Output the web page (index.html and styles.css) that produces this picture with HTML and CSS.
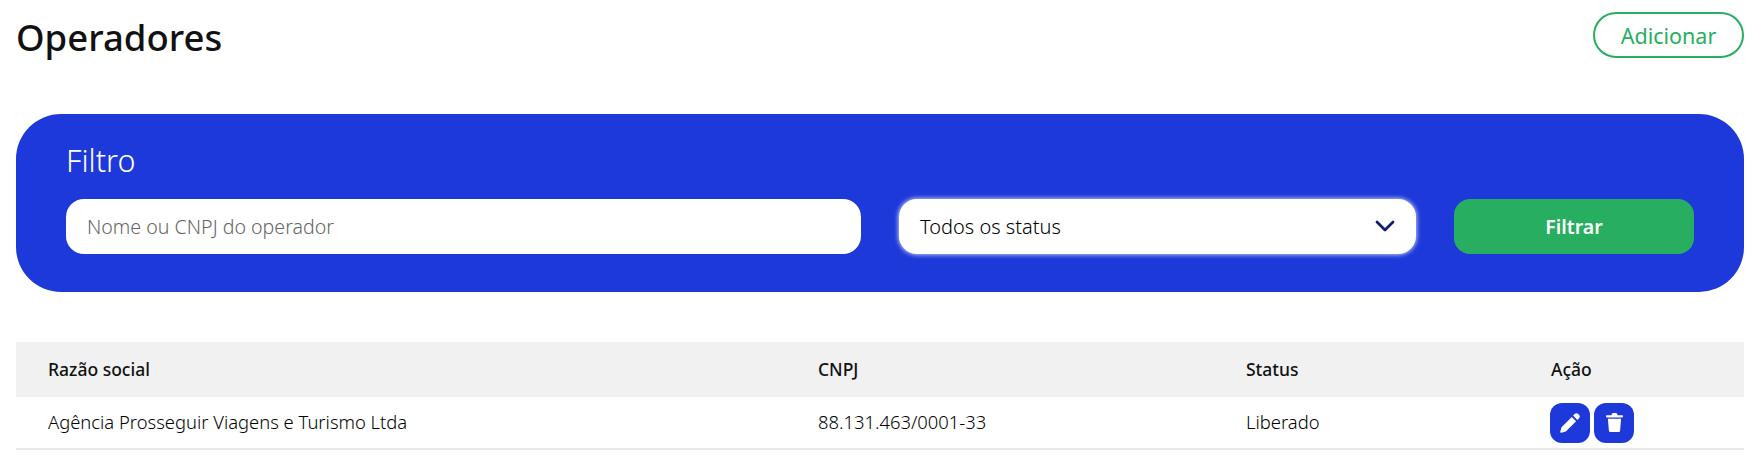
FILE: index.html
```html
<!DOCTYPE html>
<html lang="pt-BR">
<head>
<meta charset="utf-8">
<title>Operadores</title>
<link rel="stylesheet" href="styles.css">
</head>
<body>
<main class="page">
  <header class="top">
    <h1 class="title">Operadores</h1>
    <button class="add" type="button">Adicionar</button>
  </header>
  <section class="filter">
    <h2 class="filter-title">Filtro</h2>
    <div class="filter-row">
      <div class="field field-name"><span class="placeholder">Nome ou CNPJ do operador</span></div>
      <div class="field field-status">
        <span>Todos os status</span>
        <svg class="chevron" viewBox="0 0 20 12" width="20" height="12" aria-hidden="true"><path d="M2 2l8 8 8-8" fill="none" stroke="#101f73" stroke-width="2.800" stroke-linecap="round" stroke-linejoin="round"/></svg>
      </div>
      <button class="apply" type="button">Filtrar</button>
    </div>
  </section>
  <table class="list">
    <thead>
      <tr><th class="c1">Razão social</th><th class="c2">CNPJ</th><th class="c3">Status</th><th>Ação</th></tr>
    </thead>
    <tbody>
      <tr>
        <td>Agência Prosseguir Viagens e Turismo Ltda</td>
        <td>88.131.463/0001-33</td>
        <td>Liberado</td>
        <td>
          <div class="actions">
            <button class="icon-btn" type="button" aria-label="Editar"><svg viewBox="0 0 20 20" width="20" height="20" aria-hidden="true"><path fill="#fff" d="M1.500 14.200L11.800 3.900l4.300 4.300L5.800 18.500l-4.400 1.200c-.8.200-1.300-.3-1.100-1.100zM13.100 2.600L14.900.800c.9-.9 2.100-.9 3 0l1.300 1.300c.9.900.9 2.100 0 3l-1.800 1.800z"/></svg></button>
            <button class="icon-btn" type="button" aria-label="Excluir"><svg viewBox="0 0 17 19" width="17" height="19" aria-hidden="true"><path fill="#fff" d="M1.900 5.800h13.200l-1 11.600c-.1.900-.7 1.600-1.700 1.600H4.600c-1 0-1.600-.7-1.700-1.600zM.8 2.200h4.600L6 .7C6.200.300 6.500 0 7 0h3c.5 0 .8.300 1 .7l.6 1.500h4.600c.5 0 .8.400.8.800v.6c0 .4-.3.800-.8.800H.8C.3 4.400 0 4 0 3.600V3c0-.4.300-.8.800-.8z"/></svg></button>
          </div>
        </td>
      </tr>
    </tbody>
  </table>
</main>
</body>
</html>
```
FILE: styles.css
```css
* { box-sizing: border-box; }
html, body { margin: 0; background: #fff; }
body { font-family: "Noto Sans", "Open Sans", sans-serif; color: #111; overflow: hidden; }
.page { padding: 12px 9px 0 16px; }
.top { display: flex; justify-content: space-between; align-items: center; height: 46px; }
.title { margin: 0; padding-top: 4px; font-size: 36.500px; font-weight: 500; line-height: 46px; color: #111; }
.add { width: 151px; height: 46px; border: 2px solid #27ae60; border-radius: 23px; background: #fff; color: #27ae60; font: 400 21.500px "Noto Sans", sans-serif; padding: 0; }
.filter { margin-top: 56px; height: 178px; padding: 24px 50px 0; background: #1d39da; border-radius: 45px; }
.filter-title { margin: 0; font-size: 30.500px; font-weight: 300; line-height: 44px; color: #fff; }
.filter-row { display: flex; gap: 38px; margin-top: 17px; }
.field { height: 55px; background: #fff; border-radius: 18px; display: flex; align-items: center; padding: 0 21px; font-size: 20px; font-weight: 300; }
.field-name { width: 795px; }
.placeholder { color: #666; font-size: 19.600px; }
.field-status { width: 517px; justify-content: space-between; color: #000; box-shadow: 0 0 4px 1px rgba(255,255,255,.7); }
.chevron { display: block; margin-top: -2px; }
.apply { width: 240px; height: 55px; border: 0; border-radius: 16px; background: #27ae60; color: #fff; font: 600 19.500px "Noto Sans", sans-serif; padding: 0; }
.list { width: 100%; margin-top: 50px; border-collapse: collapse; table-layout: fixed; }
.c1 { width: 770px; }
.c2 { width: 428px; }
.c3 { width: 305px; }
.list th { height: 55px; padding: 0 0 2px 32px; background: #f1f1f1; text-align: left; font-size: 17.500px; font-weight: 500; color: #111; }
.list td { height: 52px; padding: 0 0 3px 32px; font-size: 18.400px; font-weight: 300; color: #000; border-bottom: 2px solid #e8e8e8; }
.list td:last-child { padding-bottom: 0; }
.actions { display: flex; gap: 4px; margin-left: -1px; }
.icon-btn { width: 40px; height: 40px; border: 0; padding: 0; border-radius: 12px; background: #1d39da; display: flex; align-items: center; justify-content: center; }
```
